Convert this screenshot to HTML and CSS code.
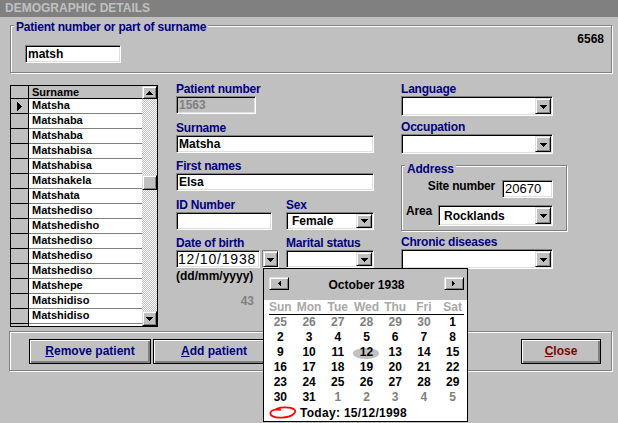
FILE: index.html
```html
<!DOCTYPE html>
<html>
<head>
<meta charset="utf-8">
<link rel="stylesheet" href="styles.css">
</head>
<body>
<div class="titlebar">DEMOGRAPHIC DETAILS</div>

<div class="search etched">
  <span class="legend">Patient number or part of surname</span>
  <div class="field search-input">matsh</div>
  <div class="count">6568</div>
</div>

<div class="main">
  <div class="grid">
    <div class="grid-table">
      <div class="grid-head"><div class="ind"></div><div class="cell">Surname</div></div>
      <div class="grid-rows">
        <div class="grid-row"><div class="ind"><svg width="5" height="9" viewBox="0 0 5 9"><rect x="0" y="0" width="1" height="9"/><rect x="1" y="1" width="1" height="7"/><rect x="2" y="2" width="1" height="5"/><rect x="3" y="3" width="1" height="3"/><rect x="4" y="4" width="1" height="1"/></svg></div><div class="cell">Matsha</div></div>
        <div class="grid-row"><div class="ind"></div><div class="cell">Matshaba</div></div>
        <div class="grid-row"><div class="ind"></div><div class="cell">Matshaba</div></div>
        <div class="grid-row"><div class="ind"></div><div class="cell">Matshabisa</div></div>
        <div class="grid-row"><div class="ind"></div><div class="cell">Matshabisa</div></div>
        <div class="grid-row"><div class="ind"></div><div class="cell">Matshakela</div></div>
        <div class="grid-row"><div class="ind"></div><div class="cell">Matshata</div></div>
        <div class="grid-row"><div class="ind"></div><div class="cell">Matshediso</div></div>
        <div class="grid-row"><div class="ind"></div><div class="cell">Matshedisho</div></div>
        <div class="grid-row"><div class="ind"></div><div class="cell">Matshediso</div></div>
        <div class="grid-row"><div class="ind"></div><div class="cell">Matshediso</div></div>
        <div class="grid-row"><div class="ind"></div><div class="cell">Matshediso</div></div>
        <div class="grid-row"><div class="ind"></div><div class="cell">Matshepe</div></div>
        <div class="grid-row"><div class="ind"></div><div class="cell">Matshidiso</div></div>
        <div class="grid-row"><div class="ind"></div><div class="cell">Matshidiso</div></div>
        <div class="grid-row"><div class="ind"></div><div class="cell">Matshidiso</div></div>
      </div>
    </div>
    <div class="scrollbar">
      <div class="raised sb-btn up"><svg width="7" height="4" viewBox="0 0 7 4"><rect x="3" y="0" width="1" height="1"/><rect x="2" y="1" width="3" height="1"/><rect x="1" y="2" width="5" height="1"/><rect x="0" y="3" width="7" height="1"/></svg></div>
      <div class="sb-track"><div class="raised sb-thumb"></div></div>
      <div class="raised sb-btn down"><svg width="7" height="4" viewBox="0 0 7 4"><rect x="0" y="0" width="7" height="1"/><rect x="1" y="1" width="5" height="1"/><rect x="2" y="2" width="3" height="1"/><rect x="3" y="3" width="1" height="1"/></svg></div>
    </div>
  </div>

  <div class="col-mid">
    <div class="fld">
      <span class="lbl">Patient number</span>
      <div class="field disabled w80">1563</div>
    </div>
    <div class="fld">
      <span class="lbl">Surname</span>
      <div class="field">Matsha</div>
    </div>
    <div class="fld">
      <span class="lbl">First names</span>
      <div class="field">Elsa</div>
    </div>
    <div class="pair">
      <div class="fld">
        <span class="lbl">ID Number</span>
        <div class="field w96"></div>
      </div>
      <div class="fld">
        <span class="lbl">Sex</span>
        <div class="combo h18"><span class="val">Female</span><span class="drop"><svg width="7" height="4" viewBox="0 0 7 4"><rect x="0" y="0" width="7" height="1"/><rect x="1" y="1" width="5" height="1"/><rect x="2" y="2" width="3" height="1"/><rect x="3" y="3" width="1" height="1"/></svg></span></div>
      </div>
    </div>
    <div class="pair">
      <div class="fld">
        <span class="lbl">Date of birth</span>
        <div class="dob">
          <div class="field w84 date">12/10/1938</div>
          <div class="dob-btn"><span class="drop"><svg width="7" height="4" viewBox="0 0 7 4"><rect x="0" y="0" width="7" height="1"/><rect x="1" y="1" width="5" height="1"/><rect x="2" y="2" width="3" height="1"/><rect x="3" y="3" width="1" height="1"/></svg></span></div>
        </div>
        <span class="hint">(dd/mm/yyyy)</span>
        <span class="age">43</span>
      </div>
      <div class="fld">
        <span class="lbl">Marital status</span>
        <div class="combo h18"><span class="val"></span><span class="drop"><svg width="7" height="4" viewBox="0 0 7 4"><rect x="0" y="0" width="7" height="1"/><rect x="1" y="1" width="5" height="1"/><rect x="2" y="2" width="3" height="1"/><rect x="3" y="3" width="1" height="1"/></svg></span></div>
      </div>
    </div>
  </div>

  <div class="col-right">
    <span class="lbl">Language</span>
    <div class="combo w152"><span class="val"></span><span class="drop"><svg width="7" height="4" viewBox="0 0 7 4"><rect x="0" y="0" width="7" height="1"/><rect x="1" y="1" width="5" height="1"/><rect x="2" y="2" width="3" height="1"/><rect x="3" y="3" width="1" height="1"/></svg></span></div>
    <span class="lbl mt4">Occupation</span>
    <div class="combo w152"><span class="val"></span><span class="drop"><svg width="7" height="4" viewBox="0 0 7 4"><rect x="0" y="0" width="7" height="1"/><rect x="1" y="1" width="5" height="1"/><rect x="2" y="2" width="3" height="1"/><rect x="3" y="3" width="1" height="1"/></svg></span></div>
    <div class="address etched">
      <span class="legend">Address</span>
      <div class="site-row">
        <span class="plain">Site number</span>
        <div class="field site">20670</div>
      </div>
      <div class="area-row">
        <span class="plain">Area</span>
        <div class="combo area h21"><span class="val">Rocklands</span><span class="drop"><svg width="7" height="4" viewBox="0 0 7 4"><rect x="0" y="0" width="7" height="1"/><rect x="1" y="1" width="5" height="1"/><rect x="2" y="2" width="3" height="1"/><rect x="3" y="3" width="1" height="1"/></svg></span></div>
      </div>
    </div>
    <span class="lbl mt4">Chronic diseases</span>
    <div class="combo w152"><span class="val"></span><span class="drop"><svg width="7" height="4" viewBox="0 0 7 4"><rect x="0" y="0" width="7" height="1"/><rect x="1" y="1" width="5" height="1"/><rect x="2" y="2" width="3" height="1"/><rect x="3" y="3" width="1" height="1"/></svg></span></div>
  </div>
</div>

<div class="actions etched">
  <div class="btn"><span><u>R</u>emove patient</span></div>
  <div class="btn add"><span><u>A</u>dd patient</span></div>
  <div class="btn close"><span><u>C</u>lose</span></div>
</div>

<div class="calendar">
  <div class="cal-head">
    <div class="nav raised"><svg width="3" height="5" viewBox="0 0 3 5"><rect x="0" y="2" width="1" height="1"/><rect x="1" y="1" width="1" height="3"/><rect x="2" y="0" width="1" height="5"/></svg></div>
    <span class="cal-title">October 1938</span>
    <div class="nav raised"><svg width="3" height="5" viewBox="0 0 3 5"><rect x="0" y="0" width="1" height="5"/><rect x="1" y="1" width="1" height="3"/><rect x="2" y="2" width="1" height="1"/></svg></div>
  </div>
  <div class="cal-body">
    <div class="cal-grid weekdays">
      <span>Sun</span><span>Mon</span><span>Tue</span><span>Wed</span><span>Thu</span><span>Fri</span><span>Sat</span>
    </div>
    <div class="cal-rule"></div>
    <div class="cal-grid days">
      <span class="other">25</span><span class="other">26</span><span class="other">27</span><span class="other">28</span><span class="other">29</span><span class="other">30</span><span>1</span>
      <span>2</span><span>3</span><span>4</span><span>5</span><span>6</span><span>7</span><span>8</span>
      <span>9</span><span>10</span><span>11</span><span class="sel">12</span><span>13</span><span>14</span><span>15</span>
      <span>16</span><span>17</span><span>18</span><span>19</span><span>20</span><span>21</span><span>22</span>
      <span>23</span><span>24</span><span>25</span><span>26</span><span>27</span><span>28</span><span>29</span>
      <span>30</span><span>31</span><span class="other">1</span><span class="other">2</span><span class="other">3</span><span class="other">4</span><span class="other">5</span>
    </div>
    <div class="cal-today">
      <svg width="28" height="13" viewBox="0 0 28 13"><path d="M6 4 C10 0.8, 21 0.6, 25.5 3.5 C28 6, 24 11, 13 11.6 C5 12, 0.6 9.6, 1.5 6.5 C2.5 3.6, 8 3, 12 4" fill="none" stroke="#f00" stroke-width="1.7"/></svg>
      <span>Today: 15/12/1998</span>
    </div>
  </div>
</div>
</body>
</html>
```
FILE: styles.css
```css
* { box-sizing: border-box; margin: 0; padding: 0; }
html, body { width: 618px; height: 423px; overflow: hidden; }
body {
  background: #c0c0c0;
  font-family: "Liberation Sans", Arial, sans-serif;
  font-size: 12px;
  font-weight: bold;
  color: #000;
  position: relative;
}

.titlebar {
  height: 17px;
  line-height: 17px;
  background: #808080;
  color: #c0c0c0;
  padding-left: 5px;
}

.etched {
  border: 1px solid #808080;
  box-shadow: inset 1px 1px 0 #fff, 1px 1px 0 #fff;
}

.raised {
  background: #c0c0c0;
  border: 1px solid;
  border-color: #dfdfdf #000 #000 #dfdfdf;
  box-shadow: inset 1px 1px 0 #fff, inset -1px -1px 0 #808080;
}

.legend {
  position: absolute;
  left: 3px;
  background: #c0c0c0;
  color: #000080;
  padding: 0 2px;
  line-height: 14px;
  letter-spacing: -0.2px;
  white-space: nowrap;
}

/* search group */
.search {
  position: relative;
  margin: 8px 6px 0 10px;
  height: 48px;
  display: flex;
  justify-content: space-between;
  align-items: flex-start;
  padding: 6px 7px 0 14px;
}
.search .legend { top: -6px; }
.search-input { width: 96px; margin-top: 13px; }
.count { line-height: 14px; }

/* fields */
.field {
  height: 18px;
  border: 1px solid;
  border-color: #808080 #fff #fff #808080;
  box-shadow: inset 1px 1px 0 #000, inset -1px -1px 0 #dfdfdf;
  background: #fff;
  padding: 0 2px;
  line-height: 16px;
  white-space: nowrap;
  overflow: hidden;
}
.field.disabled { background: #c0c0c0; color: #808080; }
.w80 { width: 80px; }
.w84 { width: 84px; }
.w96 { width: 96px; }
.w152 { width: 152px; }
.date { font-weight: normal; font-size: 14px; letter-spacing: 0.8px; padding-left: 1px; }

.combo {
  display: flex;
  height: 20px;
  border: 1px solid;
  border-color: #808080 #fff #fff #808080;
  box-shadow: inset 1px 1px 0 #000, inset -1px -1px 0 #dfdfdf;
  background: #fff;
  padding: 1px;
}
.combo.h18 { height: 18px; }
.combo.h21 { height: 21px; }
.combo .val {
  flex: 1;
  display: flex;
  align-items: center;
  padding-left: 4px;
  white-space: nowrap;
}
.drop {
  width: 16px;
  flex: none;
  background: #c0c0c0;
  border: 1px solid;
  border-color: #dfdfdf #000 #000 #dfdfdf;
  box-shadow: inset 1px 1px 0 #fff, inset -1px -1px 0 #808080;
  display: flex;
  align-items: center;
  justify-content: center;
}
.drop svg { margin-top: 1px; }

.lbl {
  display: block;
  line-height: 14px;
  color: #000080;
  letter-spacing: -0.2px;
  white-space: nowrap;
}
.mt4 { margin-top: 4px; }

/* main */
.main {
  display: flex;
  align-items: flex-start;
  margin-top: 9px;
  padding-left: 10px;
}

/* grid */
.grid {
  margin-top: 3px;
  width: 148px;
  height: 242px;
  border: 1px solid #000;
  display: flex;
  background: #fff;
  font-size: 11px;
}
.grid-table { width: 131px; display: flex; flex-direction: column; }
.grid-head, .grid-row { display: flex; }
.grid-head { height: 13px; border-bottom: 1px solid #000; background: #c0c0c0; }
.grid-rows { flex: 1; overflow: hidden; }
.grid-row { height: 15px; border-bottom: 1px solid #808080; }
.ind {
  width: 18px;
  flex: none;
  background: #c0c0c0;
  border-right: 1px solid #000;
  display: flex;
  align-items: center;
  justify-content: center;
}
.grid-row .ind { border-bottom: 1px solid #000; margin-bottom: -1px; }
.cell {
  flex: 1;
  padding-left: 3px;
  line-height: 13px;
  white-space: nowrap;
  overflow: hidden;
}
.grid-head .cell { line-height: 12px; }

.scrollbar {
  width: 15px;
  display: flex;
  flex-direction: column;
}
.sb-btn { display: flex; align-items: center; justify-content: center; flex: none; }
.sb-btn.up { height: 13px; }
.sb-btn.down { height: 15px; }
.sb-track {
  flex: 1;
  background-image: repeating-conic-gradient(#fff 0 25%, #c0c0c0 0 50%);
  background-size: 2px 2px;
}
.sb-thumb { height: 15px; margin-top: 76px; }

/* middle column */
.col-mid {
  width: 198px;
  margin-left: 18px;
  display: flex;
  flex-direction: column;
  gap: 6.5px;
}
.pair {
  display: grid;
  grid-template-columns: 110px 88px;
}
.dob { display: flex; gap: 2px; }
.dob-btn {
  width: 17px;
  height: 18px;
  border: 1px solid;
  border-color: #808080 #fff #fff #808080;
  display: flex;
}
.dob-btn .drop { width: 15px; }
.hint { display: block; line-height: 14px; margin-top: 1px; }
.age {
  display: block;
  width: 78px;
  text-align: right;
  color: #808080;
  line-height: 14px;
  margin-top: 11px;
}

/* right column */
.col-right {
  width: 166px;
  margin-left: 27px;
  display: flex;
  flex-direction: column;
  align-items: flex-start;
}
.address {
  position: relative;
  margin-top: 11px;
  width: 166px;
  height: 66px;
  padding: 14px 13px 0 4px;
}
.address .legend { top: -4px; }
.plain { line-height: 14px; margin-top: -1px; white-space: nowrap; letter-spacing: -0.2px; }
.site-row { display: flex; justify-content: flex-end; gap: 7px; }
.site { width: 51px; font-weight: normal; font-size: 13px; }
.area-row { display: flex; justify-content: space-between; margin-top: 7px; }
.area { width: 115px; }

/* actions */
.actions {
  margin: 4px 6px 0 9px;
  height: 40px;
  display: flex;
  align-items: flex-start;
  padding: 7px 10px 0 19px;
}
.btn {
  width: 122px;
  height: 25px;
  border: 1px solid #000;
  box-shadow: inset 1px 1px 0 #fff, inset -1px -1px 0 #808080, inset -2px -2px 0 #808080;
  background: #c0c0c0;
  color: #000080;
  display: flex;
  align-items: center;
  justify-content: center;
  padding-bottom: 1px;
}
.btn.add { margin-left: 2px; }
.btn.close { width: 80px; margin-left: auto; color: #800000; }

/* calendar popup */
.calendar {
  position: absolute;
  left: 263px;
  top: 268px;
  width: 205px;
  height: 154px;
  border: 1px solid #000;
  background: #fff;
}
.cal-head {
  height: 31px;
  background: #c0c0c0;
  display: flex;
  justify-content: space-between;
  align-items: flex-start;
  padding: 8px 3px 0 5px;
}
.nav {
  width: 20px;
  height: 13px;
  display: flex;
  align-items: center;
  justify-content: center;
}
.cal-title { line-height: 14px; margin-top: 1px; }
.cal-body { padding-top: 1px; }
.cal-grid {
  display: grid;
  grid-template-columns: repeat(7, 1fr);
  padding-left: 2px;
  text-align: center;
}
.weekdays { line-height: 13px; color: #a8a8a8; }
.cal-rule { height: 1px; background: #000; margin: 0 3px 0 5px; }
.days { line-height: 15px; }
.days span { position: relative; isolation: isolate; }
.days .other { color: #808080; }
.days .sel::before {
  content: "";
  position: absolute;
  left: 50%;
  top: 3px;
  width: 26px;
  height: 11px;
  margin-left: -13px;
  background: #c0c0c0;
  border-radius: 50%;
  z-index: -1;
}
.cal-today {
  display: flex;
  align-items: center;
  height: 15px;
  padding-left: 5px;
  gap: 3px;
  letter-spacing: 0.3px;
}
```
